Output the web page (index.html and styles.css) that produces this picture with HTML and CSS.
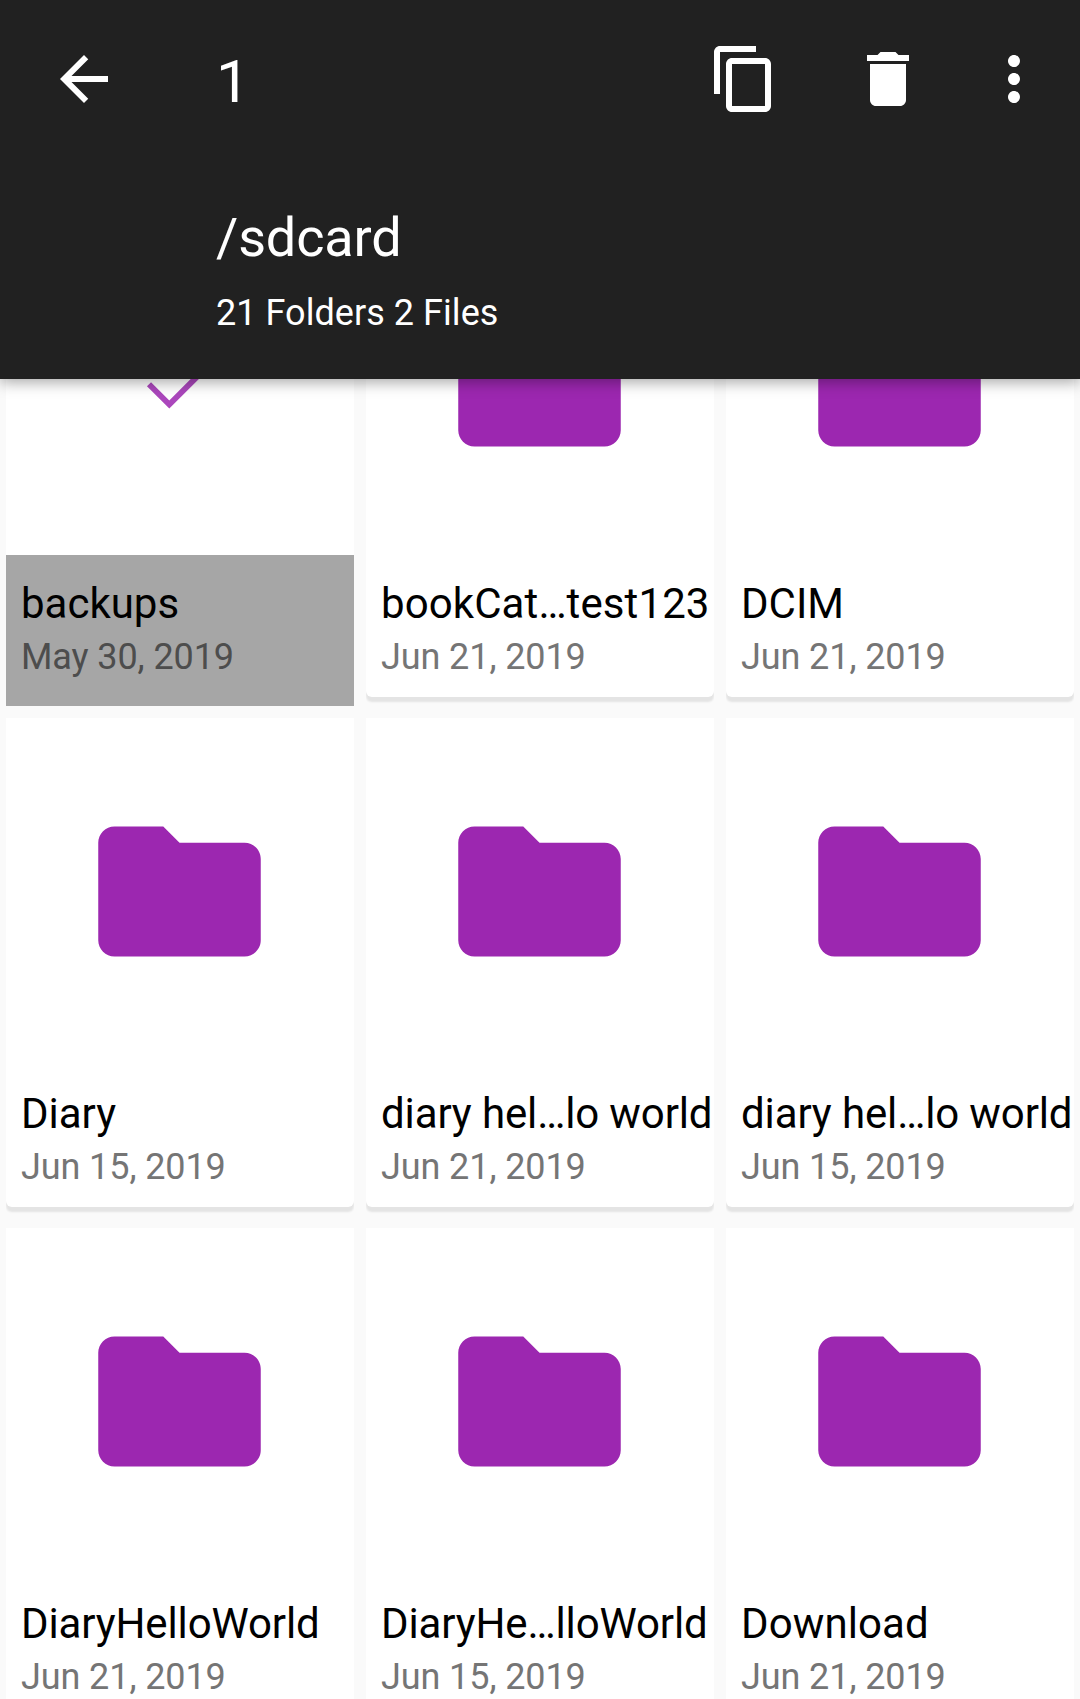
FILE: index.html
```html
<!DOCTYPE html>
<html lang="en">
<head>
<meta charset="utf-8">
<title>/sdcard</title>
<link rel="stylesheet" href="styles.css">
</head>
<body>
<svg width="0" height="0" class="defs">
  <symbol id="folder" viewBox="0 0 24 24"><path d="M10 4H4c-1.100 0-2 .9-2 2v12c0 1.100.9 2 2 2h16c1.100 0 2-.9 2-2V8c0-1.100-.9-2-2-2h-8l-2-2z"/></symbol>
</svg>
<header class="header">
  <div class="toolbar">
    <svg class="icon back" viewBox="0 0 24 24"><path d="M20 11H7.830l5.590-5.590L12 4l-8 8 8 8 1.410-1.410L7.830 13H20v-2z"/></svg>
    <span class="count">1</span>
    <svg class="icon" viewBox="0 0 24 24"><path d="M16 1H4c-1.100 0-2 .9-2 2v14h2V3h12V1zm3 4H8c-1.100 0-2 .9-2 2v14c0 1.100.9 2 2 2h11c1.100 0 2-.9 2-2V7c0-1.100-.9-2-2-2zm0 16H8V7h11v14z"/></svg>
    <svg class="icon delete" viewBox="0 0 24 24"><path d="M6 19c0 1.100.9 2 2 2h8c1.100 0 2-.9 2-2V7H6v12zM19 4h-3.500l-1-1h-5l-1 1H5v2h14V4z"/></svg>
    <svg class="icon more" viewBox="0 0 24 24"><path d="M12 8c1.100 0 2-.9 2-2s-.9-2-2-2-2 .9-2 2 .9 2 2 2zm0 2c-1.100 0-2 .9-2 2s.9 2 2 2 2-.9 2-2-.9-2-2-2zm0 6c-1.100 0-2 .9-2 2s.9 2 2 2 2-.9 2-2-.9-2-2-2z"/></svg>
  </div>
  <div class="location">
    <div class="path">/sdcard</div>
    <div class="summary">21 Folders 2 Files</div>
  </div>
</header>
<main class="files">
  <div class="grid">
    <article class="cell selected"><div class="card">
      <div class="thumb"><svg class="check" viewBox="0 0 96 96"><path d="M17 50.300L37.300 70.500L82 25.800"/></svg></div>
      <div class="info"><div class="name">backups</div><div class="date">May 30, 2019</div></div>
    </div></article>
    <article class="cell"><div class="card">
      <div class="thumb"><svg class="folder"><use href="#folder"/></svg></div>
      <div class="info"><div class="name wide">bookCat…test123</div><div class="date">Jun 21, 2019</div></div>
    </div></article>
    <article class="cell"><div class="card">
      <div class="thumb"><svg class="folder"><use href="#folder"/></svg></div>
      <div class="info"><div class="name">DCIM</div><div class="date">Jun 21, 2019</div></div>
    </div></article>
    <article class="cell"><div class="card">
      <div class="thumb"><svg class="folder"><use href="#folder"/></svg></div>
      <div class="info"><div class="name">Diary</div><div class="date">Jun 15, 2019</div></div>
    </div></article>
    <article class="cell"><div class="card">
      <div class="thumb"><svg class="folder"><use href="#folder"/></svg></div>
      <div class="info"><div class="name tight">diary hel…lo world</div><div class="date">Jun 21, 2019</div></div>
    </div></article>
    <article class="cell"><div class="card">
      <div class="thumb"><svg class="folder"><use href="#folder"/></svg></div>
      <div class="info"><div class="name tight">diary hel…lo world</div><div class="date">Jun 15, 2019</div></div>
    </div></article>
    <article class="cell"><div class="card">
      <div class="thumb"><svg class="folder"><use href="#folder"/></svg></div>
      <div class="info"><div class="name tight">DiaryHelloWorld</div><div class="date">Jun 21, 2019</div></div>
    </div></article>
    <article class="cell"><div class="card">
      <div class="thumb"><svg class="folder"><use href="#folder"/></svg></div>
      <div class="info"><div class="name tight">DiaryHe…lloWorld</div><div class="date">Jun 15, 2019</div></div>
    </div></article>
    <article class="cell"><div class="card">
      <div class="thumb"><svg class="folder"><use href="#folder"/></svg></div>
      <div class="info"><div class="name wide">Download</div><div class="date">Jun 21, 2019</div></div>
    </div></article>
  </div>
</main>
</body>
</html>
```
FILE: styles.css
```css
* { box-sizing: border-box; }
body {
  margin: 0;
  height: 1699px;
  display: flex;
  flex-direction: column;
  overflow: hidden;
  background: #fafafa;
  font-family: Roboto, sans-serif;
}
svg { display: block; flex: none; }
.defs { display: none; }

.header {
  position: relative;
  z-index: 1;
  flex: none;
  height: 379px;
  background: #212121;
  color: #fff;
  box-shadow: 0 3px 14px rgba(0, 0, 0, .36);
}
.toolbar {
  display: flex;
  align-items: center;
  height: 158px;
  padding: 0 30px 0 48px;
}
.icon { width: 72px; height: 72px; fill: #fff; }
.count { flex: 1; margin-left: 96px; padding-top: 6px; font-size: 60px; line-height: 70px; }
.delete { margin-left: 72px; }
.more { margin-left: 54px; }
.location { padding: 44px 0 0 216px; }
.path { font-size: 54px; line-height: 72px; letter-spacing: -.15px; }
.summary { margin-top: 18px; font-size: 36px; line-height: 42px; letter-spacing: .05px; }

.files { flex: 1; min-height: 0; overflow: hidden; }
.grid {
  display: grid;
  grid-template-columns: repeat(3, 348px);
  grid-auto-rows: 498px;
  gap: 12px;
  margin: -171px 6px 0;
}
.cell { overflow: hidden; }
.card {
  height: 489px;
  border-radius: 0 0 6px 6px;
  background: #fff;
  box-shadow: 0 5px 2px #e4e4e4;
}
.thumb {
  display: flex;
  align-items: center;
  height: 347px;
  padding-left: 76px;
}
.folder { width: 195px; height: 195px; fill: #9c27b0; }
.info { height: 151px; padding: 24px 0 0 15px; white-space: nowrap; }
.name { font-size: 42px; line-height: 49px; color: #000; }
.tight { letter-spacing: -.12px; }
.wide { letter-spacing: .1px; }
.date { margin-top: 8px; font-size: 36px; line-height: 42px; letter-spacing: -.1px; color: #757575; }

.selected .card { height: 498px; border-radius: 0; box-shadow: none; }
.selected .thumb { padding-left: 126px; }
.selected .info { background: #a6a6a6; }
.selected .date { color: #4d4d4d; }
.check { width: 96px; height: 96px; fill: none; stroke: #ab47bc; stroke-width: 5.800; }
```
